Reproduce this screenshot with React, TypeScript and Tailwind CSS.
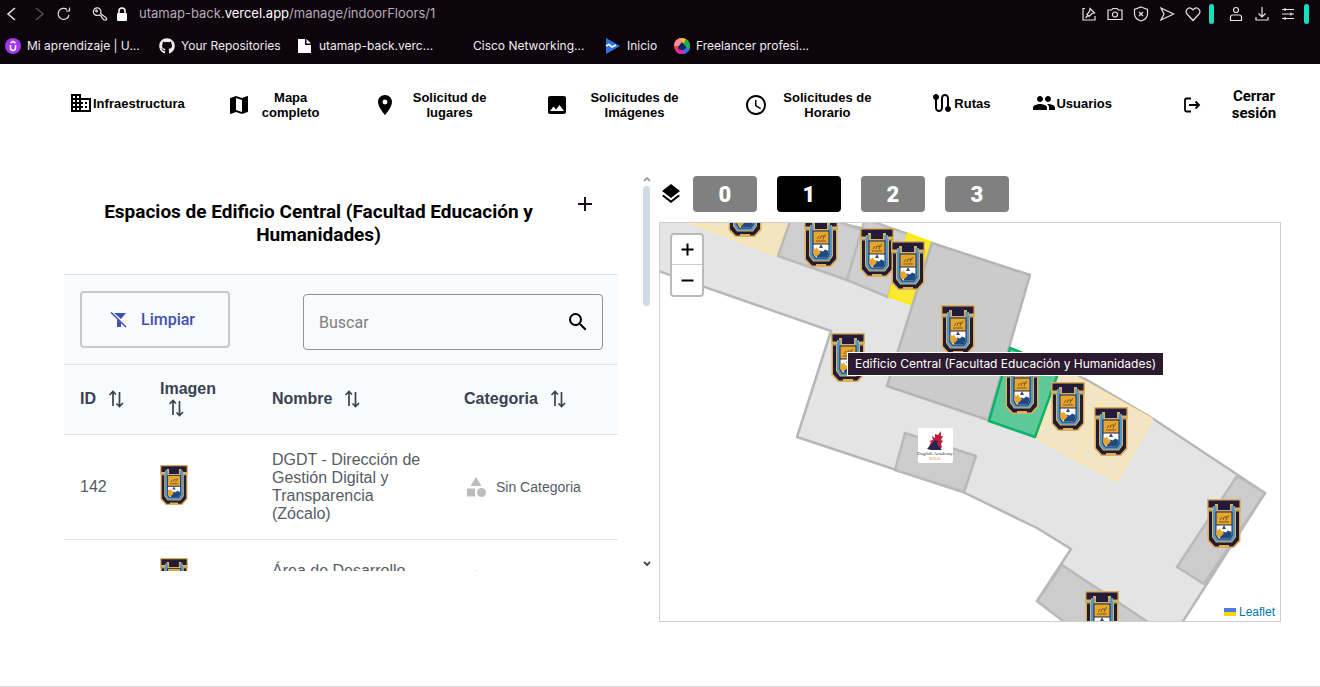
import type { ReactNode } from "react";
import {
  MdAccessTime,
  MdAdd,
  MdBusiness,
  MdCategory,
  MdGroup,
  MdImage,
  MdLayers,
  MdMap,
  MdPlace,
  MdRoute,
  MdSearch,
} from "react-icons/md";
import { FaGithub } from "react-icons/fa";

type Point = [number, number];

type Space = {
  id: number;
  name: string;
  category: string;
};

const spaces: Space[] = [
  { id: 142, name: "DGDT - Dirección de Gestión Digital y Transparencia (Zócalo)", category: "Sin Categoria" },
  { id: 143, name: "Área de Desarrollo Tecnológico", category: "Sin Categoria" },
];

const columns = [
  { label: "ID", width: "w-[80px]" },
  { label: "Imagen", width: "w-[112px]" },
  { label: "Nombre", width: "w-[192px]" },
  { label: "Categoria", width: "" },
];

const navItems = [
  { label: "Infraestructura", icon: <MdBusiness size={24} />, box: "", text: "" },
  { label: "Mapa completo", icon: <MdMap size={24} />, box: "gap-2 pt-1", text: "w-[64px]" },
  { label: "Solicitud de lugares", icon: <MdPlace size={24} />, box: "gap-3 pl-2 pr-2 pt-1", text: "w-[82px]" },
  { label: "Solicitudes de Imágenes", icon: <MdImage size={24} />, box: "gap-4 pl-1 pr-2.5 pt-1", text: "w-[100px]" },
  { label: "Solicitudes de Horario", icon: <MdAccessTime size={24} />, box: "gap-2.5 pl-2 pr-3 pt-1", text: "w-[98px]" },
  { label: "Rutas", icon: <MdRoute size={24} />, box: "", text: "" },
  { label: "Usuarios", icon: <MdGroup size={24} />, box: "pr-7", text: "" },
];

const floors = [0, 1, 2, 3];

const rooms: { points: string; fill: string; stroke: string }[] = [
  { points: "640,190 650,268 831,331 797,437 963,492 1037,528 1071,549 1037,601 1070,626 1180,626 1265,493 1152,418 1087,380 1010,348 932,244 839,223 760,190", fill: "#e4e4e4", stroke: "#b7b7b7" },
  { points: "685,221 792,212 778,256", fill: "#f3e5c0", stroke: "#fbe5b4" },
  { points: "795,207 778,256 847,280 862,230", fill: "#cfcfcf", stroke: "#bababa" },
  { points: "865,219 847,280 888,297 908,234", fill: "#cfcfcf", stroke: "#bababa" },
  { points: "908,234 932,243 912,304 889,296", fill: "#fbe93a", stroke: "#ffec00" },
  { points: "932,243 1030,275 988,420 887,386", fill: "#cbcbcb", stroke: "#b5b5b5" },
  { points: "1060,368 1107,394 1077,460 1037,438", fill: "#f2e5c5", stroke: "#fbe6b0" },
  { points: "1107,394 1152,419 1117,481 1077,460", fill: "#f2e5c5", stroke: "#fbe6b0" },
  { points: "1010,348 1060,368 1035,437 989,421", fill: "#5dc998", stroke: "#0bb26c" },
  { points: "905,433 976,456 964,492 895,470", fill: "#cccccc", stroke: "#b9b9b9" },
  { points: "1237,476 1265,493 1204,584 1177,567", fill: "#cccccc", stroke: "#b9b9b9" },
  { points: "1062,565 1037,601 1080,634 1166,634", fill: "#cccccc", stroke: "#b9b9b9" },
];

const markers: Point[] = [
  [728, 188],
  [804, 218],
  [860, 228],
  [891, 241],
  [941, 305],
  [831, 333],
  [1005, 365],
  [1051, 382],
  [1094, 407],
  [1207, 499],
  [1085, 591],
];

function CrestShape() {
  return (
    <g>
      <path d="M0 0H34V11H33.500V42L27 49H7L.5 42V11H0Z" fill="#dfae58" />
      <path d="M1.500 1.500H32.500V8.500H26V5H23V11H11V5H8V8.500H1.500Z" fill="#221b3a" />
      <path d="M2 12.500H32V41L26 47.500H22V46H12V47.500H8L2 41Z" fill="#221b35" />
      <path d="M6 7H10V12H24V7H28V10H34V11.500H29V38L25 43.500H9L5 38V11.500H0V10H6Z" fill="#dfae58" />
      <path d="M6.500 7H9.500V12.500H24.500V7H27.500V11H33V11.500H28V37.500L24.500 42.500H9.500L6 37.500V11.500H1V11H6.500Z" fill="#4f97ca" />
      <path d="M8.500 12.500H25.500V36.500L23 40.500H11L8.500 36.500Z" fill="#1f2a4c" />
      <path d="M9.500 13.500H24.500V25.500H9.500Z" fill="#e8a62d" />
      <path d="M9.500 26.500H24.500V36L22.500 39.500H11.500L9.500 36Z" fill="#fff" />
      <path d="M13 36L16 32.500L19 33.500L21 31.500L24.500 33V36L22.500 39.500H13Z" fill="#1d4a82" />
      <path d="M9.500 30L12 31L12.500 29L14.500 32L17 34L14.500 37L11.500 39L9.500 36Z" fill="#e8a62d" />
      <path d="M12 23H22M13 21L15 18M16 21L17 18H20L19 21.500M20.500 19L21.500 16" stroke="#6f5024" strokeWidth=".9" fill="none" />
      <path d="M17 26L19 30H15Z" fill="#3b4d66" />
    </g>
  );
}

function Crest() {
  return (
    <svg width="28" height="40" viewBox="0 0 34 49" className="block" aria-hidden="true">
      <CrestShape />
    </svg>
  );
}

function SortIcon() {
  return (
    <svg width="20" height="20" viewBox="0 0 20 20" fill="none" stroke="currentColor" strokeWidth="1.700" className="inline-block" aria-hidden="true">
      <path d="M7 17V3M3.500 6L7 2.500L10 5.500M13.500 3V17M10.500 14.500L13.500 17.500L17 14" />
    </svg>
  );
}

function LineIcon({ children, size = 16 }: { children: ReactNode; size?: number }) {
  return (
    <svg width={size} height={size} viewBox="0 0 16 16" fill="none" stroke="currentColor" strokeWidth="1.200" aria-hidden="true">
      {children}
    </svg>
  );
}

function BrowserBar() {
  return (
    <header className="h-16 bg-[#0c060c] text-[#e8e2e8]">
      <div className="flex h-7 items-center pl-1 pr-[11px]">
        <button aria-label="Atrás" className="mr-3"><LineIcon><path d="M11 2L4 8L11 14" strokeWidth="1.500" /></LineIcon></button>
        <button aria-label="Adelante" className="mr-2 text-[#554f55]"><LineIcon><path d="M4 2L11 8L4 14" strokeWidth="1.500" /></LineIcon></button>
        <button aria-label="Recargar" className="mr-5"><LineIcon><path d="M13 9A5.500 5.500 0 1 1 11 3.500M13.500 1.500V5H10" /></LineIcon></button>
        <span className="mr-2"><LineIcon><path d="M8.500 7.500A3.800 3.800 0 1 0 7 9L9 10L10 12L12 14H14.500V12Z" /><circle cx="4.500" cy="5" r=".8" /></LineIcon></span>
        <span className="mr-[11px]">
          <svg width="12" height="14" viewBox="0 0 12 14" aria-hidden="true">
            <rect x="1" y="6" width="10" height="8" rx="1" fill="#fff" />
            <path d="M3 6V4A3 3 0 0 1 9 4V6" stroke="#fff" strokeWidth="1.500" fill="none" />
          </svg>
        </span>
        <p className="text-[13px] text-[#b9a9b9]">
          utamap-back.<span className="text-white">vercel.app</span>/manage/indoorFloors/1
        </p>
        <div className="ml-auto flex items-center gap-2.5">
          <LineIcon><path d="M4 2.500H2V14H14V10M9 2.500L13.500 7L11 7.500L8 10.500L6 8.500L8.500 5.500ZM7 9.500L4.500 12" /></LineIcon>
          <LineIcon><path d="M1 4H4.500L6 2.500H10L11.500 4H15V13.500H1Z" /><circle cx="8" cy="8.500" r="2.500" /></LineIcon>
          <LineIcon><path d="M8 1L14.500 3.500V8C14.500 12 11 14 8 15C5 14 1.500 12 1.500 8V3.500ZM6 6L10 10M10 6L6 10" /></LineIcon>
          <LineIcon><path d="M2 2L14.500 8L2 14L5 8Z" /></LineIcon>
          <LineIcon><path d="M8 14.500L2 8C-.5 5 3 .5 6.500 2.500L8 4L9.500 2.500C13 .5 16.500 5 14 8Z" /></LineIcon>
          <span className="-ml-0.5 h-5 w-[5px] rounded-sm bg-[#12dfc0]" />
          <span className="ml-1"><LineIcon><circle cx="8" cy="4" r="2.500" /><path d="M2.500 14.500V11Q2.500 9 5 9H11Q13.500 9 13.500 11V14.500Z" /></LineIcon></span>
          <LineIcon><path d="M8 1V11M4.500 7.500L8 11L11.500 7.500M2 11V14H14V11" /></LineIcon>
          <LineIcon><path d="M2 3.500H14M2 8H14M2 12.500H14M5 2V5M11 6.500V9.500M5 11V14" /></LineIcon>
          <span className="-ml-0.5 h-5 w-[5px] rounded-sm bg-[#12dfc0]" />
        </div>
      </div>
      <nav aria-label="Marcadores" className="flex h-9 items-center pl-[5px] text-[12px] text-[#f0ecf0]">
        <a href="#" className="flex w-[154px] items-center gap-1.5 whitespace-nowrap">
          <svg width="16" height="16" viewBox="0 0 16 16" aria-hidden="true">
            <circle cx="8" cy="8" r="8" fill="#a435f0" />
            <path d="M5.500 7V10A2.500 2.500 0 0 0 10.500 10V7M5.500 5L8 3.500L10.500 5" stroke="#fff" strokeWidth="1.600" fill="none" />
          </svg>
          Mi aprendizaje | U...
        </a>
        <a href="#" className="flex w-[139px] items-center gap-1.5 whitespace-nowrap">
          <FaGithub size={16} />
          Your Repositories
        </a>
        <a href="#" className="flex w-[175px] items-center gap-2 whitespace-nowrap">
          <svg width="13" height="14" viewBox="0 0 13 14" fill="#fff" aria-hidden="true">
            <path d="M0 0H7V6H13V14H0ZM8.500 0L13 4.500H8.500Z" />
          </svg>
          utamap-back.verc...
        </a>
        <a href="#" className="w-[131px] whitespace-nowrap">Cisco Networking...</a>
        <a href="#" className="flex w-[70px] items-center gap-[7px] whitespace-nowrap">
          <svg width="16" height="16" viewBox="0 0 16 16" aria-hidden="true">
            <path d="M2 0L16 8L2 16Z" fill="#2f74e0" />
            <path d="M2 8L5 6.500L8 9L12 7" stroke="#fff" strokeWidth="1.500" fill="none" />
          </svg>
          Inicio
        </a>
        <a href="#" className="flex items-center gap-1.5 whitespace-nowrap">
          <svg width="16" height="16" viewBox="0 0 16 16" aria-hidden="true">
            <circle cx="8" cy="8" r="8" fill="#f6402c" />
            <path d="M8 8L5 .6A8 8 0 0 1 13 2Z" fill="#f8c12c" />
            <path d="M8 8L12 1A8 8 0 0 1 14.500 13Z" fill="#1fae55" />
            <path d="M8 8L15.800 10A8 8 0 0 1 8 16Z" fill="#2e75ea" />
            <path d="M8 8L10 16A8 8 0 0 1 1.500 12.500Z" fill="#d52bb0" />
            <path d="M8 8L0 8A8 8 0 0 1 6 .3Z" fill="#f58fa0" />
            <path d="M8 4L12 9Q12 12 8 12Q4 12 4 9Z" fill="#14245c" />
          </svg>
          Freelancer profesi...
        </a>
      </nav>
    </header>
  );
}

function MainNav() {
  return (
    <nav className="flex items-center justify-between pb-2 pl-[69px] pr-[38px] pt-[19px] font-['Liberation_Sans',Arial,sans-serif] text-[13px] font-bold leading-[15px] text-black">
      {navItems.map((item) => (
        <a key={item.label} href="#" className={`flex h-10 shrink-0 items-center text-center ${item.box}`}>
          {item.icon}
          <span className={item.text}>{item.label}</span>
        </a>
      ))}
      <button className="flex shrink-0 items-center gap-6 pt-1 font-['Roboto',sans-serif] text-[15px] font-bold leading-[17px]">
        <svg width="20" height="20" viewBox="0 0 20 20" fill="none" stroke="currentColor" strokeWidth="1.800" aria-hidden="true">
          <path d="M9 3.500H4.500Q3 3.500 3 5V15Q3 16.500 4.500 16.500H9M7 10H17M13.500 6.500L17 10L13.500 13.500" />
        </svg>
        <span className="w-[56px]">Cerrar sesión</span>
      </button>
    </nav>
  );
}

function SpacesTable() {
  return (
    <section className="h-[395px] min-w-0 flex-1 overflow-hidden">
      <div className="flex items-start pb-7 pr-[21px] pt-6">
        <h1 className="flex-1 px-6 text-center font-['Roboto',sans-serif] text-[19px] font-bold leading-[23px] text-black">
          Espacios de Edificio Central (Facultad Educación y Humanidades)
        </h1>
        <button aria-label="Agregar espacio" className="-mt-2 text-[#1d0f20]">
          <MdAdd size={24} />
        </button>
      </div>
      <div className="flex items-start justify-between border-y border-[#e1e5e8] bg-[#f8fafc] pb-3.5 pl-4 pr-[15px] pt-4 font-['Roboto',sans-serif]">
        <button className="flex h-[57px] w-[150px] items-center gap-3.5 rounded-sm border-2 border-[#c6c9cd] pl-7 text-[16px] font-medium text-[#4150b0]">
          <svg width="17" height="17" viewBox="0 0 17 17" aria-hidden="true">
            <path d="M4 2H16L11 8ZM7 8L11 12V16H7Z" fill="currentColor" />
            <path d="M1 1.500L16 16" stroke="currentColor" strokeWidth="1.600" />
          </svg>
          Limpiar
        </button>
        <div className="mt-[3px] flex h-14 w-[300px] items-center rounded-sm border border-[#8f9194] pl-[15px] pr-3">
          <input type="text" aria-label="Buscar" placeholder="Buscar" className="min-w-0 flex-1 bg-transparent pt-0.5 text-[16px] text-[#333] outline-none placeholder:text-[#7b7e82]" />
          <button aria-label="Buscar espacios" className="text-black"><MdSearch size={24} /></button>
        </div>
      </div>
      <table className="w-full table-fixed border-collapse text-left font-['Liberation_Sans',Arial,sans-serif] text-[16px] leading-[18px] text-[#555b66]">
        <thead>
          <tr className="h-[69px] border-b border-[#e1e5e8] bg-[#f8fafc] text-[#384252]">
            {columns.map((column) => (
              <th key={column.label} className={`px-4 font-bold ${column.width}`}>
                {column.label === "Imagen" ? (
                  <button className="block text-left">
                    {column.label}
                    <span className="block pl-1.5"><SortIcon /></span>
                  </button>
                ) : (
                  <button className="flex items-center gap-2.5">
                    {column.label}
                    <SortIcon />
                  </button>
                )}
              </th>
            ))}
          </tr>
        </thead>
        <tbody>
          {spaces.map((space) => (
            <tr key={space.id} className="h-[81px] border-b border-[#e1e5e8]">
              <td className="px-4 py-4">{space.id}</td>
              <td className="px-4 pb-1"><Crest /></td>
              <td className="px-4 py-4">{space.name}</td>
              <td className="px-4">
                <span className="flex items-center gap-2 text-[14px]">
                  <MdCategory size={24} className="text-[#bcbcbc]" />
                  {space.category}
                </span>
              </td>
            </tr>
          ))}
        </tbody>
      </table>
    </section>
  );
}

function ScrollTrack() {
  return (
    <div className="ml-6 mr-2 flex h-[395px] w-[9px] shrink-0 flex-col items-center text-[#444]" aria-hidden="true">
      <svg width="8" height="6" viewBox="0 0 8 6" fill="none" stroke="#a0a0a0" strokeWidth="1.800"><path d="M1 5L4 2L7 5" /></svg>
      <div className="mt-1 h-[120px] w-[7px] rounded bg-[#cfdbe4]" />
      <svg width="8" height="6" viewBox="0 0 8 6" className="mb-1 mt-auto" fill="none" stroke="currentColor" strokeWidth="1.800"><path d="M1 1L4 4L7 1" /></svg>
    </div>
  );
}

function FloorPlan() {
  return (
    <div className="relative h-[400px] overflow-hidden border border-[#cfcfcf] bg-white">
      <svg viewBox="660 223 620 398" preserveAspectRatio="xMinYMin slice" className="block h-full w-full" role="img" aria-label="Plano del piso 1">
        {rooms.map((room) => (
          <polygon key={room.points} points={room.points} fill={room.fill} stroke={room.stroke} strokeWidth="2.500" strokeLinejoin="round" />
        ))}
        {markers.map(([x, y]) => (
          <g key={`${x}-${y}`} transform={`translate(${x} ${y})`}>
            <CrestShape />
          </g>
        ))}
        <rect x="918" y="428" width="35" height="35" rx="2" fill="#fff" />
        <path d="M929 447L931 442L929 441L933 440L932 436L935 438L935 434L938 435L941 431L941 436L943 436L941 440L943 441L941 444L942 447L939 450Z" fill="#bd1f3b" />
        <path d="M927 449L935 440L938 441L937 444L942 450H931Z" fill="#272552" />
        <text x="935" y="455" textAnchor="middle" fontFamily="Liberation Serif" fontSize="5" fill="#30345c">English Academy</text>
        <text x="935" y="460" textAnchor="middle" fontFamily="Liberation Serif" fontSize="5" fill="#e3a044">KIDS</text>
      </svg>
      <div className="absolute left-2.5 top-2.5 flex w-[34px] flex-col rounded border-2 border-[#bababa] bg-white text-black">
        <button aria-label="Acercar" className="flex h-[30px] items-center justify-center border-b border-[#ccc]">
          <svg width="13" height="13" viewBox="0 0 13 13" stroke="currentColor" strokeWidth="2"><path d="M0.500 6.500H12.500M6.500 0.500V12.500" /></svg>
        </button>
        <button aria-label="Alejar" className="flex h-[30px] items-center justify-center">
          <svg width="13" height="13" viewBox="0 0 13 13" stroke="currentColor" strokeWidth="2"><path d="M0.500 6.500H12.500" /></svg>
        </button>
      </div>
      <div role="tooltip" className="absolute left-[187px] top-[129px] flex h-6 items-center whitespace-nowrap border border-white bg-[#2c1b2f] px-[7px] font-['Inter',sans-serif] text-[12px] text-white">
        Edificio Central (Facultad Educación y Humanidades)
      </div>
      <a href="#" className="absolute bottom-0 right-0 flex items-center gap-[3px] bg-white/80 px-[5px] font-['Liberation_Sans',Arial,sans-serif] text-[12px] leading-[18px] text-[#0078a8]">
        <svg width="12" height="8" viewBox="0 0 12 8" aria-hidden="true">
          <path fill="#4c7be1" d="M0 0h12v4H0z" />
          <path fill="#ffd500" d="M0 4h12v4H0z" />
        </svg>
        Leaflet
      </a>
    </div>
  );
}

export default function App() {
  return (
    <div className="flex min-h-screen flex-col border-b border-[#d5d5d5] bg-white font-['Inter',sans-serif]">
      <BrowserBar />
      <MainNav />
      <main className="flex items-start pl-16 pr-[39px] pt-[45px]">
        <div className="flex min-w-0 flex-[595]">
          <SpacesTable />
          <ScrollTrack />
        </div>
        <section className="min-w-0 flex-[622]">
          <div className="mb-2.5 flex items-center gap-5">
            <MdLayers size={24} className="-mr-2.5 text-black" />
            {floors.map((floor) => (
              <button
                key={floor}
                aria-pressed={floor === 1}
                className={`h-9 w-16 rounded font-['Roboto',sans-serif] text-[22px] font-black text-white ${floor === 1 ? "bg-black" : "bg-[#808080]"}`}
              >
                {floor}
              </button>
            ))}
          </div>
          <FloorPlan />
        </section>
      </main>
    </div>
  );
}
